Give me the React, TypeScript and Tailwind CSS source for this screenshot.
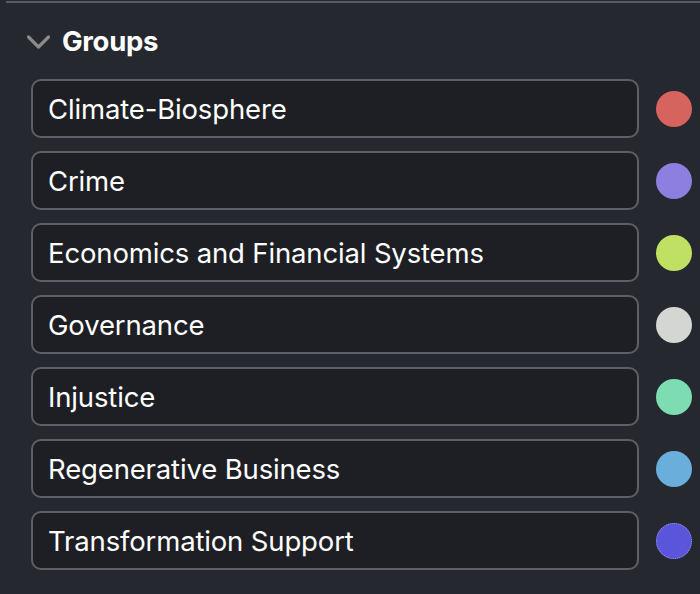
const groups = [
  { name: "Climate-Biosphere", color: "bg-[#d6635d]" },
  { name: "Crime", color: "bg-[#8c7fe0]" },
  { name: "Economics and Financial Systems", color: "bg-[#bfe063]" },
  { name: "Governance", color: "bg-[#d4d6d3]" },
  { name: "Injustice", color: "bg-[#7ddcb1]" },
  { name: "Regenerative Business", color: "bg-[#6aaedc]" },
  { name: "Transformation Support", color: "bg-[#5b55dc] border border-dotted border-[#9a96f0]" },
]

export default function App() {
  return (
    <div className="w-[700px] h-[594px] bg-[#262830] overflow-hidden font-['Inter',sans-serif] pt-px">
      <div className="ml-[6px] h-[2px] bg-[#5c5c60]" />

      <div className="flex items-center pl-[26px] pt-[21px] h-[57px]">
        <svg width="25" height="16" viewBox="0 0 25 16" className="text-[#8c8a8a]">
          <polyline points="2.5,3 12.5,13 22.5,3" fill="none" stroke="currentColor" strokeWidth="3.2" strokeLinecap="round" strokeLinejoin="round" />
        </svg>
        <span className="ml-[11px] text-[27.5px] font-bold text-white tracking-[-0.3px]">Groups</span>
      </div>

      <div className="flex flex-col gap-[13px] pl-[31px] pt-[19px]">
        {groups.map((g) => (
          <div key={g.name} className="flex items-center">
            <div className="w-[608px] h-[59px] flex items-center px-[15px] pt-[3px] rounded-[10px] border-2 border-[#5e5f63] bg-[#1e1f24]">
              <span className="text-[27.5px] text-white tracking-[-0.15px]">{g.name}</span>
            </div>
            <div className={`ml-[17px] w-[36px] h-[36px] rounded-full ${g.color}`} />
          </div>
        ))}
      </div>
    </div>
  )
}
